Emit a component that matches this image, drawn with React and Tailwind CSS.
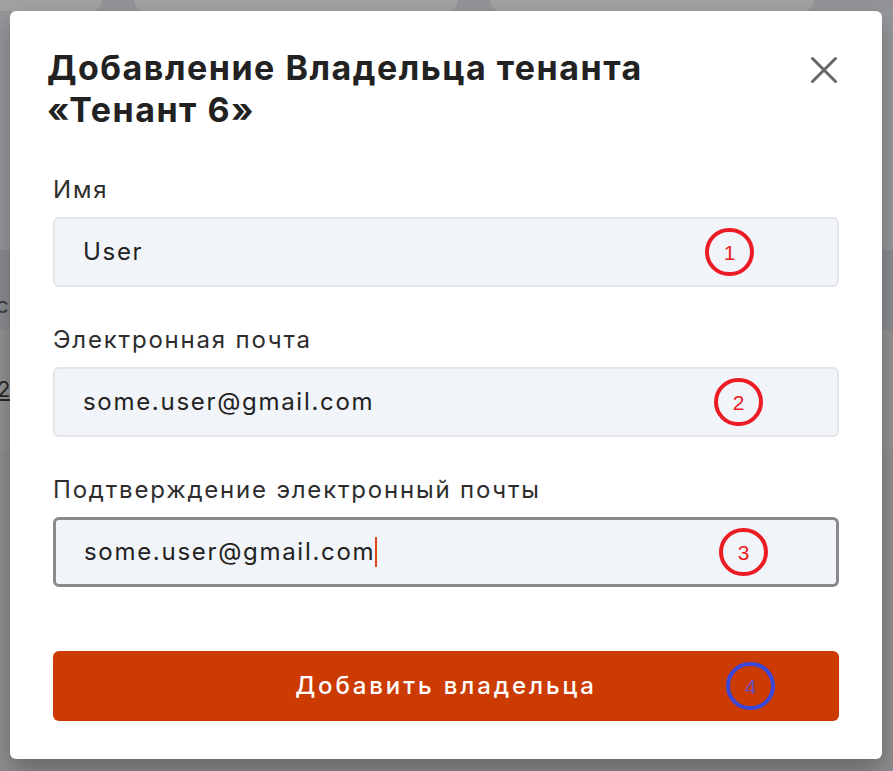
const fields = [
  { label: 'Имя', value: 'User', mark: '1', markLeft: 'left-[650px]', focused: false },
  { label: 'Электронная почта', value: 'some.user@gmail.com', mark: '2', markLeft: 'left-[659px]', focused: false },
  { label: 'Подтверждение электронный почты', value: 'some.user@gmail.com', mark: '3', markLeft: 'left-[663px]', focused: true },
]

function Mark({ n, blue, className }) {
  return (
    <span
      className={`absolute top-1/2 -translate-y-1/2 w-[49px] h-[48px] rounded-full border-[4px] flex items-center justify-center text-[21px] leading-none tracking-normal font-normal font-['Liberation_Sans',sans-serif] ${className} ${
        blue ? 'border-[#3a47d8] text-[#6b4fc2]' : 'border-[#ec1c24] text-[#ec1c24]'
      }`}
    >
      {n}
    </span>
  )
}

export default function App() {
  return (
    <div className="relative w-[893px] h-[771px] overflow-hidden bg-[#8e8f93] font-['Inter',sans-serif]">
      {/* затемнённая страница под модалкой */}
      <div className="flex flex-col h-full">
        <div className="flex gap-[32px] h-[11px] bg-[#939398]">
          <div className="w-[102px] bg-[#a2a2a2] rounded-br-[14px]" />
          <div className="w-[324px] bg-[#a2a2a2] rounded-b-[14px]" />
          <div className="w-[324px] bg-[#a2a2a2] rounded-b-[14px]" />
        </div>
        <div className="h-[239px] bg-[#96979a]" />
        <div className="h-[80px] bg-[#8b8c90]">
          <div className="pt-[42px] text-[22px] leading-[26px] text-[#3a3a3a] -ml-[4px]">с</div>
        </div>
        <div className="h-[120px] bg-[#939393]">
          <div className="pt-[46px] text-[22px] leading-[26px] text-[#2a2a2a] underline -ml-[3px]">2</div>
        </div>
        <div className="flex-1 bg-[#8f8f92]" />
      </div>

      <div className="absolute left-[10px] top-[11px] w-[872px] h-[748px] bg-white rounded-[6px] shadow-[0_12px_24px_rgba(0,0,0,0.28)] px-[43px] pt-[36px]">
        <div className="flex items-start justify-between">
          <h2 className="-ml-[6px] text-[34px] leading-[42px] font-bold text-[#222] tracking-[1.5px]">
            Добавление Владельца тенанта
            <br />
            «Тенант 6»
          </h2>
          <button className="mt-[9px] mr-[1px] text-[#666]">
            <svg width="28" height="28" viewBox="0 0 28 28" fill="none" stroke="currentColor" strokeWidth="3" strokeLinecap="round">
              <path d="M2.5 2.5 25.5 25.5M25.5 2.5 2.5 25.5" />
            </svg>
          </button>
        </div>

        <div className="mt-[44px] flex flex-col gap-[38px]">
          {fields.map((f) => (
            <div key={f.label}>
              <label className="block text-[24px] leading-[30px] text-[#2d2d2d] tracking-[1.8px]">{f.label}</label>
              <div
                className={`relative mt-[12px] h-[70px] rounded-[6px] bg-[#f1f4f9] flex items-center px-[28px] ${
                  f.focused ? 'border-[3px] border-[#8a8a8c]' : 'border-2 border-[#e3e5ea]'
                }`}
              >
                <span className="text-[24px] text-[#222] tracking-[1.7px]">{f.value}</span>
                {f.focused && <span className="w-[1.5px] h-[30px] bg-[#d9480f]" />}
                <Mark n={f.mark} className={f.markLeft} />
              </div>
            </div>
          ))}
        </div>

        <button className="relative mt-[64px] w-full h-[70px] rounded-[6px] bg-[#cc3b02] text-white text-[24px] font-medium tracking-[2.9px] flex items-center justify-center">
          Добавить владельца
          <Mark n="4" blue className="left-[673px]" />
        </button>
      </div>
    </div>
  )
}
